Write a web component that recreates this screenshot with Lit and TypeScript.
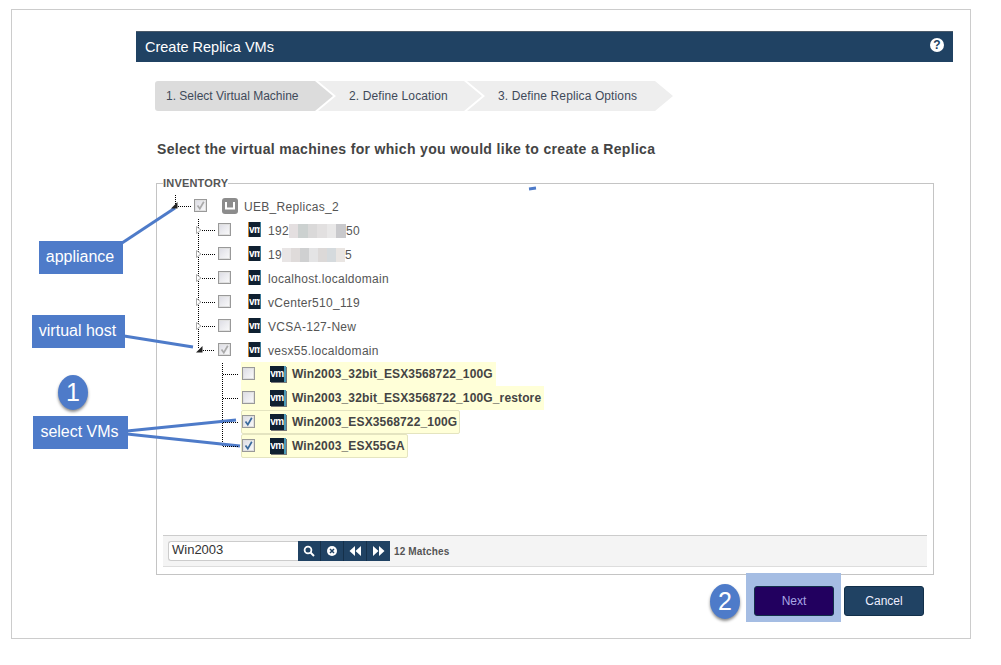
import { LitElement, html, css, svg } from "lit";
import { customElement } from "lit/decorators.js";

type Mosaic = { before: string; tiles: string[]; tileWidth: number; after: string };
type Row = { name: string; checked?: boolean; open?: boolean; mosaic?: Mosaic };

const HOSTS: Row[] = [
  { name: "", mosaic: { before: "192", tiles: ["#e4dfe0", "#ccd1d0", "#dad9d9", "#e2e0e0", "#e9e8e8", "#c9c9cc"], tileWidth: 9.5, after: "50" } },
  { name: "", mosaic: { before: "19", tiles: ["#e8e5e5", "#dfdbda", "#cfd0d1", "#e4e4e5", "#dcd9d8", "#d5dadd", "#e9e5e2"], tileWidth: 9, after: "5" } },
  { name: "localhost.localdomain" },
  { name: "vCenter510_119" },
  { name: "VCSA-127-New" },
];
const OPEN_HOST: Row = { name: "vesx55.localdomain", open: true, checked: true };
const LEAVES: Row[] = [
  { name: "Win2003_32bit_ESX3568722_100G" },
  { name: "Win2003_32bit_ESX3568722_100G_restore" },
  { name: "Win2003_ESX3568722_100G", checked: true },
  { name: "Win2003_ESX55GA", checked: true },
];

@customElement("app-root")
export class AppRoot extends LitElement {
  static styles = css`
    :host { display: block; position: relative; width: 1001px; height: 665px; background: #fff; overflow: hidden;
      font-family: "Liberation Sans", Arial, sans-serif; color: #444; }
    .frame { box-sizing: border-box; width: 960px; height: 630px; margin: 0 0 0 11px; position: relative; top: 9px;
      border: 1px solid #ccc; padding: 21px 17px 0 124px; display: flex; flex-direction: column; }
    .header { height: 31px; box-sizing: border-box; background: #204263; border-top: 1px solid #4a5a6a; color: #fff;
      display: flex; align-items: center; justify-content: space-between; padding: 0 9px; font-size: 14.5px; flex: none; }
    .help { width: 14px; height: 14px; border-radius: 50%; background: #fff; color: #204263; font-size: 12px; font-weight: bold;
      display: flex; align-items: center; justify-content: center; margin: -4px 0 0 0; line-height: 14px; }
    .steps { display: flex; margin: 19px 0 0 19px; height: 30px; flex: none; }
    .step { box-sizing: border-box; height: 30px; background: #eee; font-size: 12px; color: #3f4a5a; display: flex; align-items: center;
      clip-path: polygon(0 0, calc(100% - 18px) 0, 100% 50%, calc(100% - 18px) 100%, 0 100%, 18px 50%); }
    .step.s1 { width: 178px; padding-left: 11px; background: #dcdcdc; border-radius: 3px 0 0 3px;
      clip-path: polygon(0 0, calc(100% - 18px) 0, 100% 50%, calc(100% - 18px) 100%, 0 100%); }
    .step.s2 { width: 164px; padding-left: 31px; margin-left: -15px; letter-spacing: .12px; }
    .step.s3 { width: 206px; padding-left: 31px; margin-left: -15px; letter-spacing: .12px; }
    h1 { margin: 29px 0 0 21px; font-size: 14px; line-height: 18px; font-weight: bold; color: #444; letter-spacing: 0.33px; flex: none; }
    .inventory { box-sizing: border-box; margin: 25px 0 0 20px; width: 778px; height: 392px; border: 1px solid #c4c4c4;
      display: flex; flex-direction: column; flex: none; }
    .legend { align-self: flex-start; margin: -7px 0 0 6px; background: #fff; font-size: 11px; font-weight: bold; line-height: 13px; color: #555; letter-spacing: .2px; }
    .tree { margin-top: 4px; font-size: 12px; color: #555; letter-spacing: .3px; }
    .group { position: relative; }
    .group::before { content: ""; position: absolute; width: 1px; top: 1px; background: repeating-linear-gradient(#000 0 1px, transparent 1px 2px); }
    .group.hosts::before { left: 41px; bottom: 13px; }
    .group.leaves::before { left: 65px; bottom: 11px; }
    .row { display: flex; align-items: center; height: 24px; position: relative; }
    .row.root::before { content: ""; position: absolute; left: 18px; top: 1px; height: 10px; width: 1px;
      background: repeating-linear-gradient(#000 0 1px, transparent 1px 2px); }
    .l0 { padding-left: 14px; } .l1 { padding-left: 39px; } .l2 { padding-left: 63px; }
    .l0 .exp { width: 23px; }
    .exp { width: 22px; flex: none; display: flex; align-items: center; height: 8px; position: relative; z-index: 1; }
    .exp svg { width: 6px; height: 8px; flex: none; }
    .l0 .exp svg, .open svg { width: 7px; height: 7px; margin-top: -2px; }
    .dots { flex: 1; margin-right: 3px; height: 1px; background: repeating-linear-gradient(90deg, #000 0 1px, transparent 1px 2px); }
    .l2 .exp { padding-left: 3px; box-sizing: border-box; }
    .box { width: 13px; height: 13px; box-sizing: border-box; border: 1px solid #999; flex: none; margin-top: -1px;
      background: linear-gradient(135deg, #dcdce4, #fbfbfb); box-shadow: inset 0 0 0 1px #e0e0e0; display: flex; }
    .box svg { width: 11px; height: 11px; }
    .pad { width: 15px; flex: none; }
    .ubox { width: 16px; height: 16px; border-radius: 3px; background: #8c8c8c; flex: none; display: flex; align-items: center; justify-content: center; }
    .ubox svg { width: 10px; height: 8px; }
    .txt { margin-left: 6px; padding-top: 1px; }
    .l1 .txt { margin-left: 7px; }
    .vm { box-sizing: border-box; width: 13px; height: 15px; flex: none; margin: -1px 0 0 2px; background: #0f2031; border-left: 1px solid #d4882e; border-right: 1px solid #3a7a9a;
      color: #fff; font-size: 10px; font-weight: bold; line-height: 15px; text-align: center; letter-spacing: -.5px; overflow: hidden; }
    .leaf { height: 24px; box-sizing: border-box; background: #ffffd8; display: flex; align-items: center; margin-left: -1px; padding: 0 3px 0 1px; font-weight: bold; color: #444; letter-spacing: .14px; }
    .leaf.sel { border: 1px solid #e4e4c0; border-radius: 2px; padding: 0 2px 0 0; }
    .leaf .txt { padding-top: 0; }
    .leaf .vm { width: 16px; height: 16px; margin: 0; border-left: 0; border-right: 2px solid #4a9ab8; box-shadow: 1px 1px 0 #777; font-size: 10px; line-height: 15px; letter-spacing: -.5px; }
    .mosaic { display: inline-flex; height: 14px; vertical-align: -3px; }
    .tile { display: inline-block; height: 14px; }
    .bar { margin: auto 6px 7px; height: 32px; box-sizing: border-box; border-top: 1px solid #ccc; border-bottom: 1px solid #ddd; background: #f4f4f4;
      display: flex; align-items: center; padding-left: 5px; flex: none; }
    .input { box-sizing: border-box; width: 130px; height: 20px; background: #fff; border: 1px solid #ccc; border-right: 0; border-radius: 3px 0 0 3px;
      font-size: 13px; color: #333; line-height: 15px; padding-left: 3px; }
    .btns { display: flex; height: 20px; }
    .ib { width: 23px; box-sizing: border-box; background: #204263; border-right: 1px solid #15304a; display: flex; align-items: center; justify-content: center; }
    .ib:last-child { border-right: 0; }
    .ib svg { width: 12px; height: 12px; }
    .matches { margin-left: 4px; font-size: 10px; font-weight: bold; color: #555; letter-spacing: .15px; }
    .footer { display: flex; justify-content: flex-end; gap: 10px; margin-top: 11px; padding-right: 29px; flex: none; position: relative; z-index: 0; }
    .btn { width: 80px; height: 30px; box-sizing: border-box; border-radius: 3px; border: 1px solid #12304a; background: #204263; color: #eef;
      font-size: 12px; display: flex; align-items: center; justify-content: center; position: relative; }
    .btn.next { background: #22005f; color: #a8a6e4; }
    .btn.next::before { content: ""; position: absolute; left: -9px; top: -14px; width: 95px; height: 49px; background: #a5bde3; z-index: -1; }
    .overlay { position: absolute; left: 0; top: 0; width: 1001px; height: 665px; pointer-events: none; }
    .lines { position: absolute; left: 0; top: 0; }
    .lines g { stroke: #4e7bc9; stroke-width: 3; fill: none; }
    .call { position: absolute; box-sizing: border-box; padding-bottom: 2px; background: #4e7bc9; color: #fff; font-size: 16px; display: flex; align-items: center; justify-content: center; height: 33px; }
    .c1 { left: 39px; top: 241px; width: 84px; padding-right: 2px; }
    .c2 { left: 32px; top: 315px; width: 93px; padding-right: 2px; }
    .c3 { left: 33px; top: 416px; width: 95px; padding-right: 2px; }
    .num { position: absolute; width: 30px; height: 35px; border-radius: 50%; background: #4e7bc9; color: #fff; font-size: 25px; display: flex; align-items: center; justify-content: center;
      box-shadow: 0 2px 3px rgba(0,0,0,.45); }
    .n1 { left: 58px; top: 375px; }
    .n2 { left: 710px; top: 584px; }
  `;

  private check(color: string) {
    return html`<svg viewBox="0 0 11 11"><path d="M2.5 5.5 L4.8 8.6 L8.8 1.8" fill="none" stroke=${color} stroke-width="1.7"/></svg>`;
  }
  private tri(filled: boolean) {
    return filled
      ? html`<svg viewBox="0 0 7 7"><path d="M0 6.5 L6.5 6.5 L6.5 0 Z" fill="#222"/></svg>`
      : html`<svg viewBox="0 0 6 8"><path d="M.5 .5 L5 4 L.5 7.5 Z" fill="#fff" stroke="#aaa"/></svg>`;
  }
  private name(r: Row) {
    if (!r.mosaic) return r.name;
    const m = r.mosaic;
    return html`${m.before}<span class="mosaic">${m.tiles.map(
      (c) => html`<span class="tile" style="background:${c};width:${m.tileWidth}px"></span>`
    )}</span>${m.after}`;
  }
  private hostRow(r: Row) {
    return html`<div class="row l1">
      <div class="exp ${r.open ? "open" : ""}">${this.tri(!!r.open)}<span class="dots"></span></div>
      <span class="box">${r.checked ? this.check("#aaa") : ""}</span>
      <span class="pad"></span><span class="vm">vm</span>
      <span class="txt">${this.name(r)}</span>
    </div>`;
  }
  private leafRow(r: Row) {
    return html`<div class="row l2">
      <div class="exp"><span class="dots"></span></div>
      <div class="leaf ${r.checked ? "sel" : ""}">
        <span class="box">${r.checked ? this.check("#3a6a9c") : ""}</span>
        <span class="pad"></span><span class="vm">vm</span>
        <span class="txt">${r.name}</span>
      </div>
    </div>`;
  }

  render() {
    return html`
      <div class="frame">
        <div class="header"><span>Create Replica VMs</span><span class="help">?</span></div>
        <div class="steps">
          <div class="step s1">1. Select Virtual Machine</div>
          <div class="step s2">2. Define Location</div>
          <div class="step s3">3. Define Replica Options</div>
        </div>
        <h1>Select the virtual machines for which you would like to create a Replica</h1>
        <div class="inventory">
          <div class="legend">INVENTORY</div>
          <div class="tree">
            <div class="row root l0">
              <div class="exp">${this.tri(true)}<span class="dots"></span></div>
              <span class="box">${this.check("#aaa")}</span>
              <span class="pad"></span>
              <span class="ubox"><svg viewBox="0 0 10 8"><path d="M1 0 V6.5 H9 V0" fill="none" stroke="#fff" stroke-width="2"/></svg></span>
              <span class="txt">UEB_Replicas_2</span>
            </div>
            <div class="group hosts">
              ${HOSTS.map((r) => this.hostRow(r))}
              ${this.hostRow(OPEN_HOST)}
            </div>
            <div class="group leaves">${LEAVES.map((r) => this.leafRow(r))}</div>
          </div>
          <div class="bar">
            <div class="input">Win2003</div>
            <div class="btns">
              <span class="ib"><svg viewBox="0 0 12 12"><circle cx="5" cy="5" r="3.4" fill="none" stroke="#fff" stroke-width="1.8"/><path d="M7.5 7.5 L11 11" stroke="#fff" stroke-width="2"/></svg></span>
              <span class="ib"><svg viewBox="0 0 12 12"><circle cx="6" cy="6" r="5" fill="#fff"/><path d="M4 4 L8 8 M8 4 L4 8" stroke="#204263" stroke-width="1.5"/></svg></span>
              <span class="ib"><svg viewBox="0 0 12 12"><path d="M6 1 V11 L0.5 6 Z M12 1 V11 L6.5 6 Z" fill="#fff"/></svg></span>
              <span class="ib"><svg viewBox="0 0 12 12"><path d="M0 1 V11 L5.5 6 Z M6 1 V11 L11.5 6 Z" fill="#fff"/></svg></span>
            </div>
            <span class="matches">12 Matches</span>
          </div>
        </div>
        <div class="footer">
          <div class="btn next">Next</div>
          <div class="btn">Cancel</div>
        </div>
      </div>
      <div class="overlay">
        <svg class="lines" width="1001" height="665">
          ${svg`<g>
            <path d="M122 243 L175 208"/>
            <path d="M124 336 L193 347"/>
            <path d="M127 431 L236 420"/>
            <path d="M127 434 L240 446"/>
            <path d="M529 189 L536 188"/>
          </g>`}
        </svg>
        <div class="call c1">appliance</div>
        <div class="call c2">virtual host</div>
        <div class="call c3">select VMs</div>
        <div class="num n1">1</div>
        <div class="num n2">2</div>
      </div>
    `;
  }
}
